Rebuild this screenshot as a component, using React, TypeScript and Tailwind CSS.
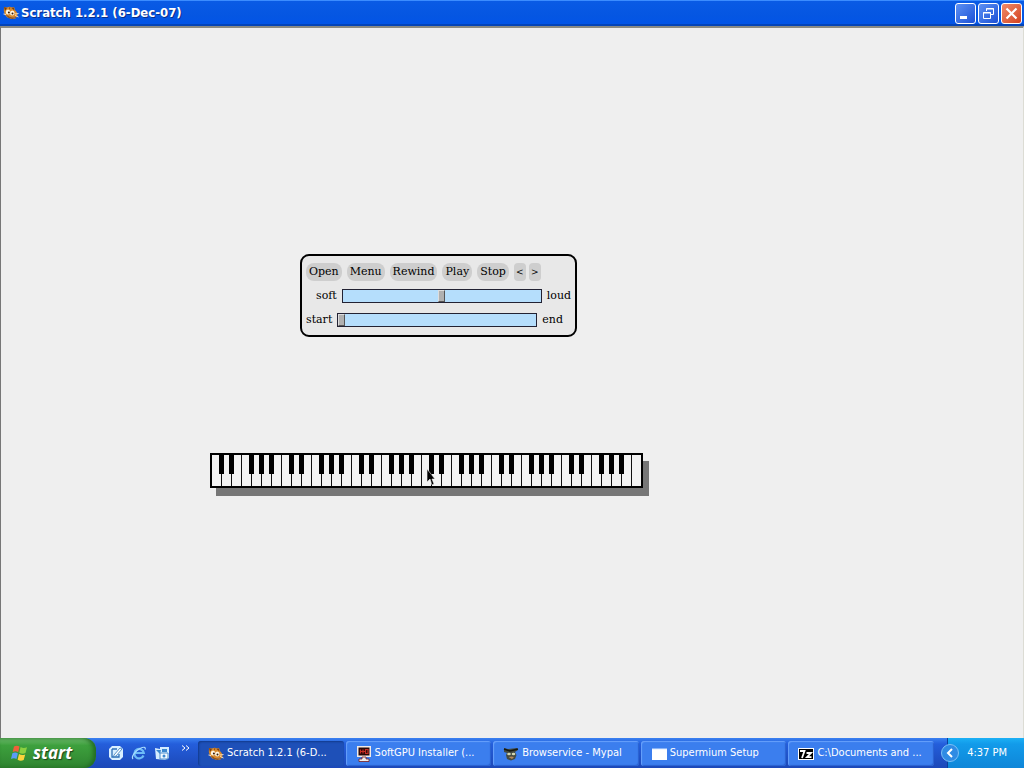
import React from "react";

const UI_FONT = "font-['DejaVu_Sans_Condensed','DejaVu_Sans',sans-serif]";

function CatIcon({ className }: { className: string }) {
  return (
    <svg viewBox="0 0 16 16" className={className} aria-hidden="true">
      <path d="M1 2l3 .5c2-1 3.500-1 5 0l2-.5 1 3 2 2.500.5 3-2 3-4 .5-4-1.500L2 10 .8 6z" fill="#d98a2c" />
      <path d="M1 2l3 1-2 3zM8.500 3l2.300-.5.7 3zM6 2.500l.5 2 1-2z" fill="#7a3f10" />
      <ellipse cx="5" cy="7" rx="2.200" ry="2.600" fill="#fff6e0" />
      <ellipse cx="9.300" cy="8" rx="2.300" ry="2.500" fill="#fff6e0" />
      <circle cx="5.900" cy="7.500" r="1" fill="#3a1c08" />
      <circle cx="9.500" cy="8.500" r="1" fill="#3a1c08" />
      <path d="M4 10.500c2 2.500 5.500 3 9 1.200-1 2.800-7 2.500-9-1.200z" fill="#fff" stroke="#7a3f10" strokeWidth=".8" />
      <path d="M12 9l3.500-.5M12 10.500l3.500 1.500M.5 9l2.500.5" fill="none" stroke="#ffe9c6" strokeWidth=".9" />
    </svg>
  );
}

function FlagIcon() {
  return (
    <svg viewBox="0 0 18 18" className="h-[18px] w-[18px] shrink-0" aria-hidden="true">
      <path d="M3 2.500c2-1.300 3.800-1 5.500 0L7.200 8.200C5.500 7 3.700 7 1.700 8z" fill="#f0603a" />
      <path d="M9.600 3c2 1.200 4 1.200 6.400.2l-1.500 5.900c-2.200 1-4.200.8-6.200-.3z" fill="#8bd040" />
      <path d="M1.400 9.200c2-1 3.800-.9 5.500.2l-1.400 5.700C3.800 14 2 14 0 15z" fill="#5b9cf5" />
      <path d="M8 10c2 1.200 4 1.300 6.200.4l-1.500 5.700c-2.200 1-4.100.9-6.100-.3z" fill="#fcd33c" />
    </svg>
  );
}

function DesktopIcon() {
  return (
    <svg viewBox="0 0 16 16" className="h-4 w-4" aria-hidden="true">
      <path d="M4 1h8l3 3v8l-3 3H4l-3-3V4z" fill="#d9efff" />
      <path d="M4 4h5M4 4v8h7V9" fill="none" stroke="#2d6fb8" strokeWidth="1.300" />
      <path d="M6 10l6-7 2 1-6 7-2.500 1z" fill="#fff" stroke="#3478b8" strokeWidth=".8" />
    </svg>
  );
}

function ExplorerIcon() {
  return (
    <svg viewBox="0 0 16 16" className="h-4 w-4" aria-hidden="true">
      <path d="M12.500 10.500A4.700 4.700 0 1 1 12.800 8H4.500" fill="none" stroke="#6dbcf7" strokeWidth="2.200" />
      <path d="M2 14C0 12 4 6 9 3.500c4-2 6-1.500 5 1" fill="none" stroke="#a9dcff" strokeWidth="1.200" />
    </svg>
  );
}

function MailIcon() {
  return (
    <svg viewBox="0 0 16 16" className="h-4 w-4" aria-hidden="true">
      <path d="M1 3l5 1V2l9 0v11l-4 2-9-1z" fill="#d5edff" />
      <path d="M2 5l4 4 1-4M8 4h5v3H8z" fill="#3b88cf" />
      <path d="M6 8h8v6H6z" fill="#f4fbff" stroke="#4a8ccc" />
      <circle cx="10" cy="11" r="1.500" fill="#3b88cf" />
    </svg>
  );
}

function MonitorIcon() {
  return (
    <svg viewBox="0 0 16 16" className="h-4 w-4 shrink-0" aria-hidden="true">
      <path d="M1 0h14v11H1z" fill="#f3ebe6" />
      <path d="M2.500 1.500h11v8h-11z" fill="#280808" />
      <path d="M4.500 3.500v4M7 3.500v4M9.500 3.500h2.500v4H9.500zM4.500 5.500h5" fill="none" stroke="#c52d25" strokeWidth="1.200" />
      <path d="M6 11h4v2h3v2.500H3V13h3z" fill="#eee" stroke="#7a1b1b" strokeWidth=".8" />
    </svg>
  );
}

function GogglesIcon() {
  return (
    <svg viewBox="0 0 16 16" className="h-4 w-4 shrink-0" aria-hidden="true">
      <path d="M1 2l4 1 9-1 1 2-3 2 1.500 3-1.500 4-4 1.500-4-1.500-1-4 1-2-3-1z" fill="#454b42" />
      <path d="M1 3l6 2 8-2" fill="none" stroke="#151812" strokeWidth="1.600" />
      <ellipse cx="6" cy="8" rx="1.800" ry="1.300" fill="#d2d6b0" />
      <ellipse cx="10.500" cy="8" rx="1.800" ry="1.300" fill="#d2d6b0" />
      <path d="M5.500 11l3-.5 2.500.5-2 2z" fill="#b78a5c" />
    </svg>
  );
}

function WindowIcon() {
  return (
    <svg viewBox="0 0 16 16" className="h-4 w-4 shrink-0" aria-hidden="true">
      <path d="M1 3h15v11H1z" fill="#fff" />
      <path d="M1 3h15" stroke="#dbe9ff" />
    </svg>
  );
}

function SevenZipIcon() {
  return (
    <svg viewBox="0 0 16 16" className="h-4 w-4 shrink-0" aria-hidden="true">
      <path d="M0 2h16v12H0z" fill="#fff" />
      <path d="M1 3h14v10H1z" fill="#000" />
      <path d="M2 5h4.500L4 12M8.500 7h4.500l-4 4.200h4.500" fill="none" stroke="#fff" strokeWidth="1.800" />
    </svg>
  );
}

const captionButton =
  "flex h-[21px] w-[21px] items-center justify-center rounded-[3px] border border-white";

function TitleBar() {
  return (
    <header className="flex h-[26px] shrink-0 items-center bg-linear-to-b from-[#0a5be5] via-[#0556e2] via-60% to-[#0254e8] pr-0.5 pl-[3px] shadow-[inset_0_1px_0_#3b8cff,inset_0_-2px_0_#0444b8]">
      <CatIcon className="h-4 w-4 shrink-0" />
      <h1 className={`${UI_FONT} ml-0.5 grow text-[13px] leading-4 font-bold text-white [text-shadow:1px_1px_0_#0a2f8a]`}>
        Scratch 1.2.1 (6-Dec-07)
      </h1>
      <div className="flex gap-0.5">
        <button aria-label="Minimize" className={`${captionButton} bg-linear-to-br from-[#5d90f3] to-[#1c4fd6]`}>
          <svg viewBox="0 0 19 19" className="h-[19px] w-[19px]"><path d="M4 12h7v3H4z" fill="#fff" /></svg>
        </button>
        <button aria-label="Restore" className={`${captionButton} bg-linear-to-br from-[#5d90f3] to-[#1c4fd6]`}>
          <svg viewBox="0 0 19 19" className="h-[19px] w-[19px]" fill="none" stroke="#fff">
            <path d="M7.500 7V4.500h7v6H12M7 5h8" />
            <path d="M4.500 8.500h7v6h-7zM4 9h8" />
          </svg>
        </button>
        <button aria-label="Close" className={`${captionButton} bg-linear-to-br from-[#f08a68] to-[#d3401c]`}>
          <svg viewBox="0 0 19 19" className="h-[19px] w-[19px]"><path d="M4.500 4.500l10 10M14.500 4.500l-10 10" stroke="#fff" strokeWidth="2.200" /></svg>
        </button>
      </div>
    </header>
  );
}

const playerButton = "h-[18px] rounded-lg bg-[#cecece] px-[3px]";
const stepButton = "h-[18px] w-3 rounded-sm bg-[#cecece] text-[9px]";
const playerSlider =
  "h-[14px] w-[200px] appearance-none border border-[#223] bg-[#b5defc] [&::-webkit-slider-thumb]:h-3 [&::-webkit-slider-thumb]:w-[7px] [&::-webkit-slider-thumb]:appearance-none [&::-webkit-slider-thumb]:border [&::-webkit-slider-thumb]:border-t-[#ddd] [&::-webkit-slider-thumb]:border-r-[#555] [&::-webkit-slider-thumb]:border-b-[#555] [&::-webkit-slider-thumb]:border-l-[#ddd] [&::-webkit-slider-thumb]:bg-[#b0b0b0]";

function ScorePlayer() {
  return (
    <section className="absolute top-[254px] left-[300px] flex h-[83px] w-[277px] flex-col gap-1.5 rounded-[9px] border-2 border-black bg-[#e8e8e8] pt-[7px] font-['DejaVu_Serif',serif] text-[11px] leading-[18px] text-black">
      <div className="flex gap-[5px] pl-1">
        <button className={playerButton}>Open</button>
        <button className={playerButton}>Menu</button>
        <button className={playerButton}>Rewind</button>
        <button className={playerButton}>Play</button>
        <button className={playerButton}>Stop</button>
        <div className="flex gap-[3px]">
          <button aria-label="Previous" className={stepButton}>&lt;</button>
          <button aria-label="Next" className={stepButton}>&gt;</button>
        </div>
      </div>
      <div className="flex items-center gap-[5px] pl-3.5">
        <label htmlFor="volume">soft</label>
        <input id="volume" type="range" defaultValue={50} className={playerSlider} />
        <span>loud</span>
      </div>
      <div className="flex items-center gap-[5px] pl-1">
        <label htmlFor="position">start</label>
        <input id="position" type="range" defaultValue={0} className={playerSlider} />
        <span>end</span>
      </div>
    </section>
  );
}

const WHITE_KEYS = Array.from({ length: 43 }, (_, i) => i);

function hasSharp(i: number) {
  return i < 42 && i % 7 !== 2 && i % 7 !== 6;
}

function Piano() {
  return (
    <svg
      role="img"
      aria-label="Piano keyboard"
      viewBox="0 0 439 43"
      shapeRendering="crispEdges"
      className="absolute top-[453px] left-[210px] h-[43px] w-[439px]"
    >
      <rect x="6" y="8" width="433" height="35" fill="#767676" />
      <rect width="433" height="35" fill="#000" />
      <rect x="2" y="2" width="429" height="31" fill="#f3f3f3" />
      {WHITE_KEYS.slice(0, 42).map((i) => (
        <rect key={i} x={11 + i * 10} y="2" width="1" height="31" fill="#111" />
      ))}
      {WHITE_KEYS.filter(hasSharp).map((i) => (
        <rect key={i} x={9 + i * 10} y="2" width="5" height="19" fill="#000" />
      ))}
    </svg>
  );
}

function Pointer() {
  return (
    <svg viewBox="0 0 10 17" className="absolute top-[469px] left-[426px] h-[17px] w-2.5" aria-hidden="true">
      <path d="M1 0v13l3-3 2 6 2-1-2-5h3z" fill="#000" stroke="#f3f3f3" strokeWidth=".6" />
    </svg>
  );
}

const TASKS = [
  { label: "Scratch 1.2.1 (6-D...", icon: <CatIcon className="h-4 w-4 shrink-0" />, active: true },
  { label: "SoftGPU Installer (...", icon: <MonitorIcon />, active: false },
  { label: "Browservice - Mypal", icon: <GogglesIcon />, active: false },
  { label: "Supermium Setup", icon: <WindowIcon />, active: false },
  { label: "C:\\Documents and ...", icon: <SevenZipIcon />, active: false },
];

function Taskbar() {
  return (
    <footer className={`${UI_FONT} flex h-[30px] shrink-0 bg-linear-to-b from-[#3a80f0] via-[#245edb] via-20% to-[#1c48b8] text-[11px] text-white`}>
      <button className="flex w-24 shrink-0 items-center gap-1 rounded-r-xl bg-linear-to-b from-[#6cbb6c] via-[#3da03d] via-25% to-[#2f8430] pl-[11px] font-['Open_Sans',sans-serif] text-[17px] leading-5 font-bold italic shadow-[inset_-3px_0_4px_#236b23] [text-shadow:1px_1px_1px_#1b431b]">
        <FlagIcon />
        start
      </button>
      <nav aria-label="Quick launch" className="flex w-[102px] shrink-0 items-center gap-[7px] pl-3">
        <button aria-label="Show desktop"><DesktopIcon /></button>
        <button aria-label="Internet Explorer"><ExplorerIcon /></button>
        <button aria-label="Outlook Express"><MailIcon /></button>
        <button aria-label="More" className="ml-1 self-start pt-[7px]">
          <svg viewBox="0 0 9 7" className="h-[7px] w-[9px]" fill="none" stroke="#fff">
            <path d="M1 .5l3 2.500-3 2.500M5 .5l3 2.500-3 2.500" />
          </svg>
        </button>
      </nav>
      <div className="flex min-w-0 grow gap-0.5 pt-[3px] pb-0.5">
        {TASKS.map((t) => (
          <button
            key={t.label}
            className={`flex min-w-0 flex-1 items-center gap-[3px] rounded-[3px] pl-2.5 whitespace-nowrap ${
              t.active
                ? "bg-[#1e50b8] shadow-[inset_1px_1px_2px_#123a8c]"
                : "bg-[#3b7eee] shadow-[inset_1px_1px_1px_#69a1fb,inset_-1px_-1px_1px_#2a61cf]"
            }`}
          >
            {t.icon}
            <span>{t.label}</span>
          </button>
        ))}
      </div>
      <div className="flex w-[90px] shrink-0">
        <button aria-label="Show hidden icons" className="z-10 -mr-3 ml-[7px] self-center">
          <svg viewBox="0 0 18 18" className="h-[18px] w-[18px]">
            <circle cx="9" cy="9" r="8.500" fill="#2f8be4" stroke="#7cc0f5" />
            <path d="M11 5L7 9l4 4" fill="none" stroke="#fff" strokeWidth="2" />
          </svg>
        </button>
        <div className="flex grow items-center justify-end border-l border-[#0b3f9a] bg-linear-to-b from-[#1cb0f5] via-[#129bea] via-20% to-[#0f86d8] pr-[17px]">
          <time>4:37 PM</time>
        </div>
      </div>
    </footer>
  );
}

export default function App() {
  return (
    <div className="flex h-screen flex-col overflow-hidden bg-[#efefef]">
      <TitleBar />
      <main className="grow border-t-2 border-r border-l border-t-[#8a8a84] border-r-[#dcdcd4] border-l-[#777]">
        <ScorePlayer />
        <Piano />
        <Pointer />
      </main>
      <Taskbar />
    </div>
  );
}
